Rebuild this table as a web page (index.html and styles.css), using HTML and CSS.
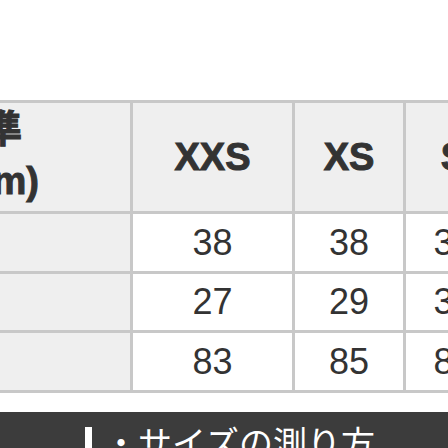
FILE: index.html
```html
<!DOCTYPE html>
<html lang="ja">
<head>
<meta charset="utf-8">
<title>サイズ表</title>
<link rel="stylesheet" href="styles.css">
</head>
<body>
<div class="sheet">
  <div class="cell head label"><span class="line">寸法基準</span><span class="line">(単位:cm)</span></div>
  <div class="cell head">XXS</div>
  <div class="cell head">XS</div>
  <div class="cell head">S</div>
  <div class="cell head">M</div>

  <div class="cell label side">肩幅</div>
  <div class="cell val">38</div>
  <div class="cell val">38</div>
  <div class="cell val">39</div>
  <div class="cell val">40</div>

  <div class="cell label side">袖丈</div>
  <div class="cell val">27</div>
  <div class="cell val">29</div>
  <div class="cell val">31</div>
  <div class="cell val">33</div>

  <div class="cell label side">着丈</div>
  <div class="cell val">83</div>
  <div class="cell val">85</div>
  <div class="cell val">87</div>
  <div class="cell val">89</div>
</div>
<div class="howto">
  <h2 class="howto-title"><span class="mark"></span>・サイズの測り方</h2>
</div>
</body>
</html>
```
FILE: styles.css
```css
html, body {
  margin: 0;
  padding: 0;
  overflow: hidden;
  background: #ffffff;
}
body {
  font-family: "Liberation Sans", "Noto Sans CJK JP", sans-serif;
  color: #333333;
  width: 448px;
  height: 448px;
}
.sheet {
  margin-top: 100px;
  margin-left: -173px;
  width: max-content;
  display: grid;
  grid-template-columns: 300px 159px 108px 95px 108px;
  grid-template-rows: 108px 57px 56px 57px;
  gap: 3px;
  padding: 3px;
  background: #c8c8c8;
}
.cell {
  display: flex;
  align-items: center;
  justify-content: center;
  background: #ffffff;
}
.head {
  background: #efefef;
  font-weight: bold;
  font-size: 38px;
  -webkit-text-stroke: 1px #333333;
}
.label {
  background: #efefef;
  justify-content: flex-start;
  padding-left: 40px;
  font-weight: bold;
  font-size: 38px;
}
.head.label {
  flex-direction: column;
  align-items: flex-start;
  justify-content: center;
  line-height: 52px;
  padding-bottom: 4px;
  box-sizing: border-box;
}
.line {
  display: block;
  white-space: nowrap;
}
.side {
  font-size: 34px;
}
.val {
  font-size: 36px;
}
.howto {
  margin-top: 19px;
  background: #3c3c3c;
  height: 80px;
  padding: 15px 0 0 85px;
  box-sizing: border-box;
}
.howto-title {
  margin: 0;
  display: flex;
  align-items: center;
  font-size: 34px;
  line-height: 34px;
  font-weight: normal;
  color: #ffffff;
  white-space: nowrap;
}
.mark {
  display: block;
  width: 7px;
  height: 34px;
  background: #ffffff;
  margin-right: 12px;
}
```
